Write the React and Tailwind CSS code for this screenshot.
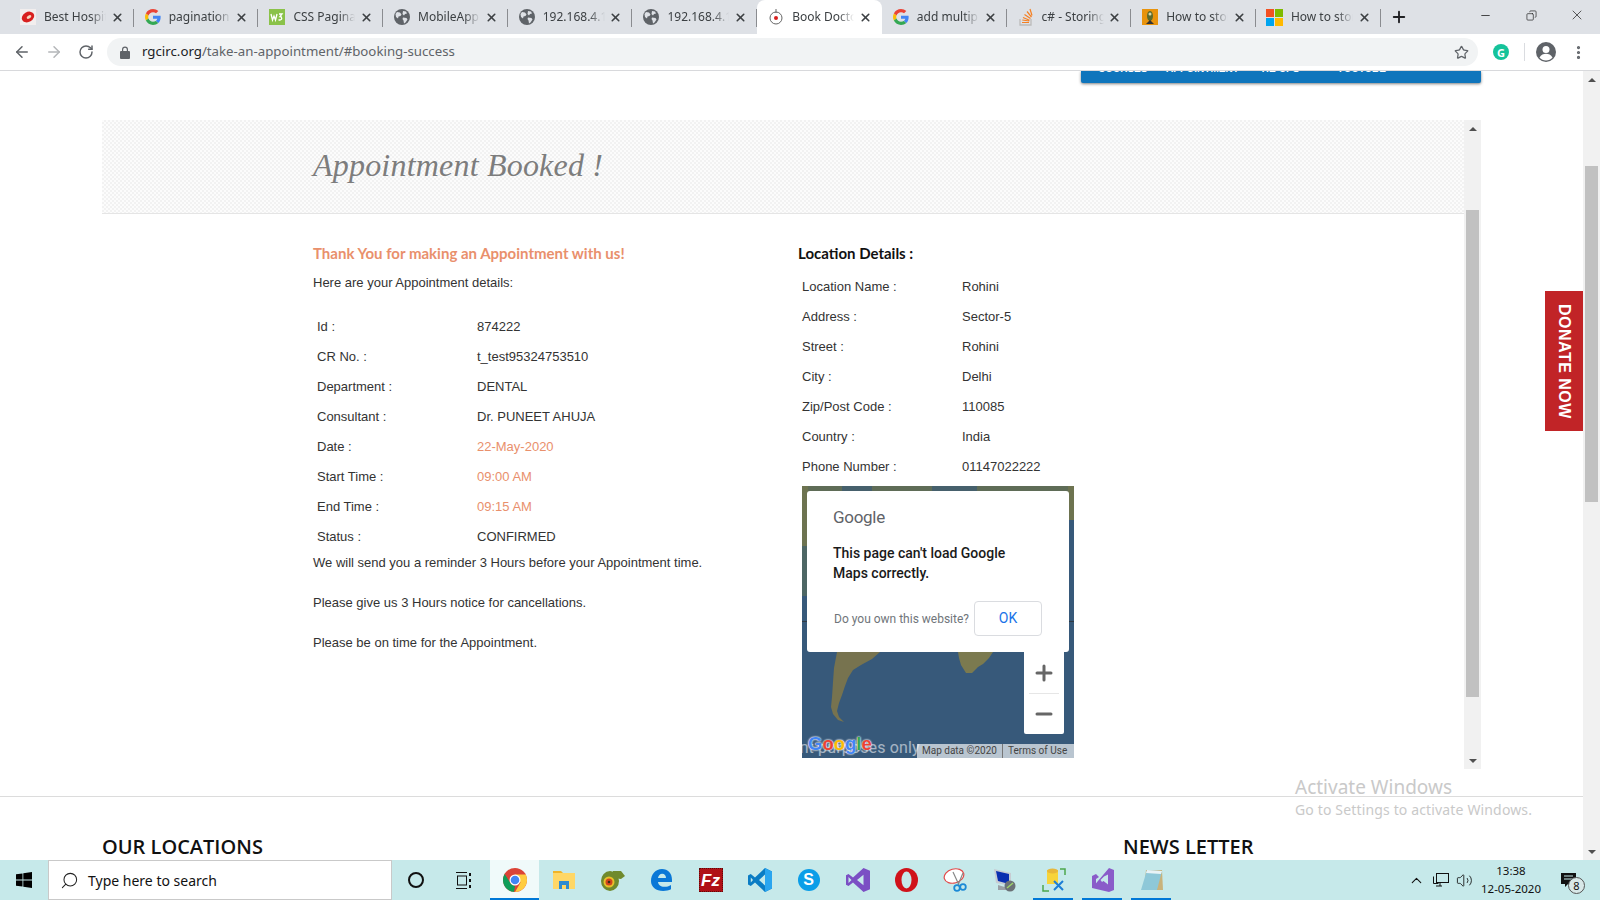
import { ArrowLeft, ArrowRight, RotateCw, Star, MoreVertical, X, Plus, Minus, ChevronUp, Volume2, Search, Copy } from "lucide-react";

const sans = "font-['Liberation_Sans',Arial,sans-serif]";
const lato = "font-['Lato',sans-serif]";
const segoe = "font-['Noto_Sans',sans-serif]";
const roboto = "font-['Roboto',sans-serif]";

// favicons
function GoogleG({ size = 16 }) {
  return (
    <svg width={size} height={size} viewBox="0 0 48 48" className="shrink-0">
      <path fill="#EA4335" d="M24 9.500c3.500 0 6.700 1.300 9.100 3.500l6.800-6.800C35.800 2.400 30.300 0 24 0 14.600 0 6.500 5.400 2.600 13.200l7.900 6.100C12.400 13.600 17.700 9.500 24 9.500z" />
      <path fill="#4285F4" d="M46.900 24.500c0-1.600-.1-3.100-.4-4.500H24v9h12.900c-.6 3-2.200 5.500-4.700 7.200l7.700 6c4.500-4.200 7-10.300 7-17.700z" />
      <path fill="#FBBC05" d="M10.500 28.700c-.5-1.400-.8-3-.8-4.700s.3-3.300.8-4.700l-7.900-6.100C.9 16.500 0 20.100 0 24s.9 7.500 2.600 10.800l7.900-6.100z" />
      <path fill="#34A853" d="M24 48c6.500 0 11.900-2.100 15.900-5.800l-7.700-6c-2.200 1.500-4.900 2.300-8.200 2.300-6.300 0-11.600-4.200-13.500-9.800l-7.900 6.100C6.500 42.600 14.600 48 24 48z" />
    </svg>
  );
}
function Globe() {
  return (
    <svg width="16" height="16" viewBox="0 0 16 16" className="shrink-0">
      <circle cx="8" cy="8" r="8" fill="#5f6368" />
      <path fill="#dee1e6" d="M3 3l3 .5 1.500 2-1 1.500-2 .5-.5 2L2 8 1.500 5zM9 2l3 .5 1 2-2 .5-1 1.500-1.500-1.500zM9 8.500l3.500.5 1 1.500-2 3-1.500 1-.5-3-1-1.500z" />
    </svg>
  );
}
function BestHospital() {
  return (
    <svg width="16" height="16" viewBox="0 0 16 16" className="shrink-0">
      <rect width="16" height="16" fill="#f2eeee" />
      <ellipse cx="8" cy="8" rx="6.500" ry="5" fill="#d8201f" transform="rotate(-30 8 8)" />
      <ellipse cx="9" cy="8" rx="2.500" ry="1.500" fill="#f4d9c0" transform="rotate(-30 9 8)" />
    </svg>
  );
}
function W3() {
  return (
    <svg width="16" height="16" viewBox="0 0 16 16" className="shrink-0">
      <rect width="16" height="16" fill="#8ac249" />
      <path d="M2 5l1.500 6L5 7l1.500 4L8 5M10 5h3l-2 2.500c2 0 2.500 3.500 0 3.500h-1.500" fill="none" stroke="#fff" strokeWidth="1.300" />
    </svg>
  );
}
function RgcIcon() {
  return (
    <svg width="16" height="18" viewBox="0 0 16 18" className="shrink-0">
      <circle cx="8" cy="10" r="6" fill="#fff" stroke="#666" strokeWidth="1" />
      <path d="M8 1v4" stroke="#666" strokeWidth="1" />
      <circle cx="8" cy="10" r="2" fill="#d8201f" />
    </svg>
  );
}
function StackOverflow() {
  return (
    <svg width="16" height="18" viewBox="0 0 16 18" className="shrink-0">
      <path d="M2 11v6h11v-6" fill="none" stroke="#bcbbbb" strokeWidth="1.300" />
      <path d="M4 14.500h7M4.300 12l7 1M5 9.500l6.500 2.700M6.500 6.500l6 4M9 3.500l4.500 5.500M12 1l2 6.500" fill="none" stroke="#f48024" strokeWidth="1.200" />
    </svg>
  );
}
function Robot() {
  return (
    <svg width="16" height="16" viewBox="0 0 16 16" className="shrink-0">
      <rect width="16" height="16" fill="#e8930c" />
      <ellipse cx="8" cy="7" rx="3" ry="5" fill="#5b6b2d" />
      <circle cx="8" cy="5" r="1.500" fill="#d8d8b0" />
      <path d="M4 15l4-4 4 4z" fill="#333" />
    </svg>
  );
}
function MsLogo({ size = 17 }) {
  return (
    <svg width={size} height={size} viewBox="0 0 17 17" className="shrink-0">
      <rect width="8" height="8" fill="#f25022" />
      <rect x="9" width="8" height="8" fill="#7fba00" />
      <rect y="9" width="8" height="8" fill="#00a4ef" />
      <rect x="9" y="9" width="8" height="8" fill="#ffb900" />
    </svg>
  );
}

const tabs = [
  { title: "Best Hospital", icon: <BestHospital /> },
  { title: "pagination css", icon: <GoogleG /> },
  { title: "CSS Pagination", icon: <W3 /> },
  { title: "MobileApp Demo", icon: <Globe /> },
  { title: "192.168.4.118", icon: <Globe /> },
  { title: "192.168.4.118", icon: <Globe /> },
  { title: "Book Doctor", icon: <RgcIcon />, active: true },
  { title: "add multiple", icon: <GoogleG /> },
  { title: "c# - Storing", icon: <StackOverflow /> },
  { title: "How to store", icon: <Robot /> },
  { title: "How to store", icon: <MsLogo /> },
];

function Tab({ title, icon, active }) {
  return (
    <div className={`relative flex h-[34px] w-[124.7px] shrink-0 items-center pl-[11px] pr-[10px] ${active ? "rounded-t-lg bg-white" : ""}`}>
      <div className="flex w-[16px] justify-center">{icon}</div>
      <div className={`ml-[8px] w-[62px] overflow-hidden whitespace-nowrap text-[12px] text-[#3c4043] ${segoe} [mask-image:linear-gradient(90deg,#000_75%,transparent)]`}>{title}</div>
      <X size={13} strokeWidth={3} className="ml-auto text-[#3c4043]" />
      {!active && <span className="absolute right-0 top-[9px] h-[18px] w-px bg-[#8a8c90]" />}
    </div>
  );
}

function TabBar() {
  return (
    <div className="flex h-[34px] shrink-0 bg-[#dee1e6] pl-[9px]">
      {tabs.map((t, i) => (
        <Tab key={i} {...t} />
      ))}
      <div className="ml-[9px] flex h-[34px] w-[18px] items-center justify-center">
        <Plus size={18} strokeWidth={2.500} className="text-[#202124]" />
      </div>
      <div className="ml-auto flex">
        <div className="flex h-[30px] w-[46px] items-center justify-center"><Minus size={13} strokeWidth={1.500} className="text-[#222]" /></div>
        <div className="flex h-[30px] w-[46px] items-center justify-center"><Copy size={11} strokeWidth={1.500} className="-scale-x-100 text-[#222]" /></div>
        <div className="flex h-[30px] w-[46px] items-center justify-center"><X size={16} strokeWidth={1.100} className="text-[#222]" /></div>
      </div>
    </div>
  );
}

function Toolbar() {
  return (
    <div className="flex h-[37px] shrink-0 items-center border-b border-[#d8d9dc] bg-white">
      <ArrowLeft size={18} strokeWidth={2} className="ml-[13px] text-[#5f6368]" />
      <ArrowRight size={18} strokeWidth={2} className="ml-[14px] text-[#b4b6b9]" />
      <RotateCw size={16} strokeWidth={2.200} className="ml-[15px] text-[#5f6368]" />
      <div className="ml-[13px] flex h-[28px] w-[1371px] items-center rounded-full bg-[#f1f3f4] pl-[13px] pr-[9px]">
        <svg width="10" height="13" viewBox="0 0 10 13" className="shrink-0">
          <path fill="#5f6368" d="M1 5h1V3.500a3 3 0 0 1 6 0V5h1a1 1 0 0 1 1 1v6a1 1 0 0 1-1 1H1a1 1 0 0 1-1-1V6a1 1 0 0 1 1-1zm2.200 0h3.600V3.500a1.800 1.800 0 0 0-3.600 0z" />
        </svg>
        <span className={`ml-[12px] text-[13.25px] leading-none ${segoe}`}>
          <span className="text-[#202124]">rgcirc.org</span>
          <span className="text-[#5f6368]">/take-an-appointment/#booking-success</span>
        </span>
        <Star size={15} strokeWidth={2} className="ml-auto text-[#5f6368]" />
      </div>
      <div className="ml-[15px] flex h-[16px] w-[16px] items-center justify-center rounded-full bg-[#15c39a] text-[11px] font-bold leading-none text-white">G</div>
      <span className="ml-[15px] h-[18px] w-px bg-[#dadce0]" />
      <svg width="20" height="20" viewBox="0 0 20 20" className="ml-[11px]">
        <circle cx="10" cy="10" r="10" fill="#5f6368" />
        <circle cx="10" cy="7.500" r="3.500" fill="#fff" />
        <path d="M3.500 15.500c1.500-3 4-3.800 6.500-3.800s5 .8 6.500 3.800c-1.500 1.800-4 3-6.500 3s-5-1.200-6.500-3z" fill="#fff" />
      </svg>
      <MoreVertical size={17} strokeWidth={2.500} className="ml-[14px] text-[#5f6368]" />
    </div>
  );
}

function ScrollBar({ top, height }) {
  return (
    <div className="flex w-[17px] shrink-0 flex-col bg-[#f1f1f1]">
      <div className="flex h-[17px] items-center justify-center">
        <span className="h-0 w-0 border-x-[4px] border-b-[4px] border-x-transparent border-b-[#505050]" />
      </div>
      <div className={`mx-[2px] ${top} ${height} bg-[#c1c1c1]`} />
      <div className="flex-1" />
      <div className="flex h-[17px] items-center justify-center">
        <span className="h-0 w-0 border-x-[4px] border-t-[4px] border-x-transparent border-t-[#505050]" />
      </div>
    </div>
  );
}

function DetailRow({ label, value, orange }) {
  return (
    <div className="flex h-[30px] items-center pl-[4px]">
      <span className="w-[160px]">{label}</span>
      <span className={orange ? "text-[#e9906c]" : ""}>{value}</span>
    </div>
  );
}

const appointment = [
  ["Id :", "874222"],
  ["CR No. :", "t_test95324753510"],
  ["Department :", "DENTAL"],
  ["Consultant :", "Dr. PUNEET AHUJA"],
  ["Date :", "22-May-2020", true],
  ["Start Time :", "09:00 AM", true],
  ["End Time :", "09:15 AM", true],
  ["Status :", "CONFIRMED"],
];

const location = [
  ["Location Name :", "Rohini"],
  ["Address :", "Sector-5"],
  ["Street :", "Rohini"],
  ["City :", "Delhi"],
  ["Zip/Post Code :", "110085"],
  ["Country :", "India"],
  ["Phone Number :", "01147022222"],
];

function MapBox() {
  return (
    <div className={`relative h-[272px] w-[272px] overflow-hidden bg-[#37597a] ${roboto}`}>
      <svg width="272" height="272" viewBox="0 0 272 272" className="block">
        <path fill="#5f6c57" d="M0 0h272v6H0z" />
        <path fill="#46606c" d="M40 0h30v6H40zM130 0h45v6h-45z" />
        <path fill="#6d7350" d="M0 0h6v60H0z" />
        <path fill="#4d6664" d="M0 60h6v50H0z" />
        <path fill="#6d7350" d="M266 0h6v34h-6z" />
        <path fill="#2f3a44" d="M0 135h272v1H0z" />
        <path fill="#77734f" d="M35 166h43l-8 7-11 6-8 5-5 8-3 8-3 9-3 8-2 8 2 6 5 5-6-2-5-6-2-7 1-10 1-15 1-14z" />
        <path fill="#7b7a4f" d="M156 166h35l-4 6-6 6-5 3-6 6-6 0-5-8-2-7z" />
      </svg>

      <div className="absolute left-[5px] top-[5px] h-[161px] w-[262px] rounded-[3px] bg-white">
        <div className="pl-[26px] pt-[14px] text-[17px] leading-[24px] tracking-[-0.3px] text-[#5f6368]">Google</div>
        <div className="mt-[14px] pl-[26px] text-[14px] font-medium leading-[20px] text-[#1a1a1a]">
          This page can't load Google
          <br />
          Maps correctly.
        </div>
        <div className="mt-[18px] flex items-center pl-[27px]">
          <span className="w-[140px] shrink-0 whitespace-nowrap text-[12px] text-[#70757a]">Do you own this website?</span>
          <span className="flex h-[35px] w-[68px] items-center justify-center rounded-[4px] border border-[#dadce0] text-[14px] text-[#1a73e8]">OK</span>
        </div>
      </div>

      <div className="absolute left-[222px] top-[166px] flex h-[82px] w-[40px] flex-col items-center rounded-b-[2px] bg-white">
        <div className="flex h-[41px] items-center justify-center"><Plus size={24} strokeWidth={3} className="text-[#666]" /></div>
        <span className="h-px w-[30px] bg-[#e6e6e6]" />
        <div className="flex h-[40px] items-center justify-center"><Minus size={24} strokeWidth={3} className="text-[#666]" /></div>
      </div>

      <div className="absolute bottom-[1px] left-[-11px] whitespace-nowrap text-[16px] leading-[18px] tracking-[0.15px] text-white/55">ent purposes only</div>
      <div className={`absolute bottom-[4px] left-[6px] text-[18.5px] font-bold leading-[20px] ${sans} [text-shadow:0_0_2px_#fff,0_0_2px_#fff]`}>
        <span className="text-[#4285f4]">G</span>
        <span className="text-[#ea4335]">o</span>
        <span className="text-[#fbbc05]">o</span>
        <span className="text-[#4285f4]">g</span>
        <span className="text-[#34a853]">l</span>
        <span className="text-[#ea4335]">e</span>
      </div>
      <div className="absolute bottom-0 right-0 flex h-[14px] w-[157px] items-center bg-white/65 text-[10px] leading-none text-[#444]">
        <span className="w-[85px] pl-[5px]">Map data ©2020</span>
        <span className="h-[14px] w-px bg-[#777]" />
        <span className="pl-[5px]">Terms of Use</span>
      </div>
    </div>
  );
}

function Content() {
  return (
    <div className="flex min-w-0 flex-1 flex-col">
      <div className="flex h-[94px] shrink-0 items-center border-b border-[#e5e5e5] pb-[4px] pl-[211px] [background:repeating-conic-gradient(#f2f2f2_0_25%,#fcfcfc_0_50%)_0_0/4px_4px]">
        <h1 className="font-['Liberation_Serif',serif] text-[32px] italic leading-none tracking-[0.2px] text-[#7d7d7d]">Appointment Booked !</h1>
      </div>
      <div className={`flex pl-[211px] pt-[29px] text-[13px] text-[#333] ${sans}`}>
        <div className="w-[485px]">
          <h3 className={`text-[15px] font-bold leading-[20px] text-[#e9906c] ${lato}`}>Thank You for making an Appointment with us!</h3>
          <p className="mt-[10px] leading-[20px]">Here are your Appointment details:</p>
          <div className="mt-[19px]">
            {appointment.map(([l, v, o]) => (
              <DetailRow key={l} label={l} value={v} orange={o} />
            ))}
          </div>
          <p className="mt-[1px] leading-[20px]">We will send you a reminder 3 Hours before your Appointment time.</p>
          <p className="mt-[20px] leading-[20px]">Please give us 3 Hours notice for cancellations.</p>
          <p className="mt-[20px] leading-[20px]">Please be on time for the Appointment.</p>
        </div>
        <div>
          <h3 className={`text-[15px] font-bold leading-[20px] text-[#111] ${lato}`}>Location Details :</h3>
          <div className="mt-[9px]">
            {location.map(([l, v]) => (
              <DetailRow key={l} label={l} value={v} />
            ))}
          </div>
          <div className="ml-[4px] mt-[4px]"><MapBox /></div>
        </div>
      </div>
    </div>
  );
}

function Page() {
  return (
    <div className="relative flex min-h-0 flex-1 bg-white">
      <div className="flex w-[1583px] shrink-0 flex-col overflow-hidden">
        <div className="ml-[1081px] flex h-[12px] w-[400px] shrink-0 rounded-b-[2px] bg-[#0f75bc] shadow-[0_1px_3px_rgba(0,0,0,0.5)]">
          <div className={`flex h-[3px] w-full overflow-hidden pl-[17px] text-[10px] font-bold leading-[10px] text-white ${sans}`}>
            <span className="-mt-[7px] w-[68px] shrink-0">COURSES</span>
            <span className="-mt-[7px] w-[94px] shrink-0">APPOINTMENT</span>
            <span className="-mt-[7px] w-[77px] shrink-0">TIE-UPS</span>
            <span className="-mt-[7px] shrink-0">YOUTUBE</span>
          </div>
        </div>
        <div className="ml-[102px] mt-[37px] flex h-[649px] w-[1379px] shrink-0">
          <Content />
          <ScrollBar top="mt-[73px]" height="h-[487px]" />
        </div>
        <div className="mt-[27px] h-px shrink-0 bg-[#dcdcdc]" />
        <div className="flex pl-[102px] pt-[36px] font-['Open_Sans',sans-serif] text-[20px] font-semibold leading-[28px] text-[#111]">
          <span className="w-[1021px]">OUR LOCATIONS</span>
          <span>NEWS LETTER</span>
        </div>
      </div>
      <ScrollBar top="mt-[78px]" height="h-[336px]" />

      <div className={`absolute left-[1545px] top-[220px] flex h-[140px] w-[38px] items-center justify-center bg-[#c12427] text-[16px] font-bold tracking-[0.5px] text-white ${sans} [writing-mode:vertical-rl]`}>DONATE NOW</div>

      <div className={`pointer-events-none absolute left-[1295px] top-[703px] text-[#c9c9c9] ${segoe}`}>
        <div className="text-[19px] leading-[26px]">Activate Windows</div>
        <div className="text-[14px] leading-[20px] tracking-[0.15px]">Go to Settings to activate Windows.</div>
      </div>
    </div>
  );
}

// taskbar icons
const taskIcons = {
  chrome: (
    <svg width="24" height="24" viewBox="0 0 24 24">
      <circle cx="12" cy="12" r="12" fill="#db4437" />
      <path fill="#0f9d58" d="M12 24C5.400 24 0 18.600 0 12c0-2.300.6-4.300 1.700-6.100L8 16l4 2.200-1 5.700z" />
      <path fill="#ffcd40" d="M12 24l5.500-9.500L12 6.500h10.800c.8 1.600 1.200 3.500 1.200 5.500 0 6.600-5.400 12-12 12z" />
      <circle cx="12" cy="12" r="5.500" fill="#fff" />
      <circle cx="12" cy="12" r="4.300" fill="#4285f4" />
    </svg>
  ),
  folder: (
    <svg width="22" height="20" viewBox="0 0 22 20">
      <path fill="#f0b429" d="M0 1h8l2 2h-10z" />
      <path fill="#ffd766" d="M0 3h22v16H0z" />
      <path fill="#2d8bd0" d="M6 11h10v8h-3v-4H9v4H6z" />
    </svg>
  ),
  chameleon: (
    <svg width="24" height="22" viewBox="0 0 24 22">
      <ellipse cx="9" cy="12" rx="9" ry="10" fill="#6f8a2d" />
      <path d="M12 2h8l4 5-4 3-8-1z" fill="#6f8a2d" />
      <circle cx="8" cy="13" r="5.500" fill="#e8c02a" />
      <circle cx="8" cy="13" r="3.500" fill="#d2451e" />
      <circle cx="8" cy="13" r="1.300" fill="#3b2a12" />
    </svg>
  ),
  edge: (
    <svg width="21" height="22" viewBox="0 0 21 22">
      <path fill="#0a78d7" d="M0 12C0 5 4.500 0 11 0c6 0 10 4 10 11v2H7c.3 3 2.700 4.800 6.300 4.800 2.500 0 4.800-.7 6.700-1.900v4.400c-2.200 1.200-4.800 1.700-7.800 1.700C5 22 0 18 0 12zm7-3h8c0-2.700-1.500-4.300-3.800-4.300S7.500 6.300 7 9z" />
    </svg>
  ),
  filezilla: (
    <div className={`flex h-[24px] w-[24px] items-center justify-center border border-dotted border-[#5e0a0a] bg-[#b01116] text-[17px] font-bold italic leading-none text-white ${sans}`}>Fz</div>
  ),
  vscode: (
    <svg width="24" height="24" viewBox="0 0 24 24">
      <path fill="#0a7cc4" d="M17 0l7 3.500v17L17 24 7 14.500 2.800 18 0 16.500v-9L2.800 6 7 9.500zM17 6.500L11 12l6 5.500zM2.800 9.500v5L5 12z" />
      <path fill="#2aa5ef" d="M17 0l7 3.500v17L17 24z" />
    </svg>
  ),
  skype: (
    <div className={`flex h-[22px] w-[22px] items-center justify-center rounded-full bg-[#0b9ee8] text-[16px] font-bold leading-none text-white ${sans}`}>S</div>
  ),
  vs: (
    <svg width="24" height="24" viewBox="0 0 24 24">
      <path fill="#7b4fc4" d="M17.500 0L24 2.800v18.400L17.500 24 7 14.500 2.500 18 0 16.700V7.300L2.500 6 7 9.500zM17.500 6.800L11 12l6.500 5.200zM2.500 9v6L5.500 12z" />
    </svg>
  ),
  opera: (
    <svg width="23" height="24" viewBox="0 0 23 24">
      <ellipse cx="11.500" cy="12" rx="11.500" ry="12" fill="#d0121a" />
      <ellipse cx="11.500" cy="12" rx="5" ry="8.500" fill="#c6e9ea" />
    </svg>
  ),
  snip: (
    <svg width="26" height="24" viewBox="0 0 26 24">
      <ellipse cx="11" cy="8" rx="10" ry="7" fill="#fff" stroke="#e24a4a" strokeWidth="1.200" transform="rotate(-15 11 8)" />
      <path d="M10 4l6 13M20 5l-5 12" stroke="#888" strokeWidth="1.200" />
      <circle cx="14" cy="20" r="2.800" fill="none" stroke="#1c8ad6" strokeWidth="1.800" />
      <circle cx="20" cy="19" r="2.800" fill="none" stroke="#1c8ad6" strokeWidth="1.800" />
    </svg>
  ),
  rdp: (
    <svg width="24" height="24" viewBox="0 0 24 24">
      <path fill="#c7ccd2" d="M1 1l17 4v13L3 15z" />
      <path fill="#0a2fb0" d="M3 3l13 3v10L5 13z" />
      <path fill="#9aa0a6" d="M5 17l10 3v2H5z" />
      <circle cx="17" cy="18" r="5.500" fill="#6b7176" />
      <path d="M14 20l6-5" stroke="#9ed36a" strokeWidth="1.500" />
    </svg>
  ),
  sqltool: (
    <svg width="24" height="24" viewBox="0 0 24 24">
      <path fill="#f7d43a" d="M5 2h11v14H5z" />
      <ellipse cx="10.500" cy="3" rx="5.500" ry="2.500" fill="#e8b83a" />
      <path d="M1 17v6h6M18 1h5v6" fill="none" stroke="#4ca64c" strokeWidth="1.500" />
      <path d="M12 13l9 9M21 13l-9 9" stroke="#1c7ed6" strokeWidth="2" />
    </svg>
  ),
  vs2: (
    <svg width="24" height="24" viewBox="0 0 24 24">
      <path fill="#8a5cc9" d="M18 0l5 2v20l-5 2-17-4zM1 20V8l4-2 3 3-3 2v6z" />
      <path fill="#c6e9ea" d="M17 6.500v10l-4.500-3.500L11 14l-1.500-2L13 8.500z" />
    </svg>
  ),
  notepad: (
    <svg width="24" height="24" viewBox="0 0 24 24">
      <path fill="#c9b27a" d="M6 2l16 0 1 20H4z" />
      <path fill="#8ec8d8" d="M7 2l15 1-5 19H1z" />
      <path fill="#e8f3f6" d="M7 2l15 1-1 3-15-1z" />
    </svg>
  ),
};

const taskbarApps = [
  { key: "chrome", active: true },
  { key: "folder" },
  { key: "chameleon" },
  { key: "edge" },
  { key: "filezilla" },
  { key: "vscode" },
  { key: "skype" },
  { key: "vs" },
  { key: "opera" },
  { key: "snip" },
  { key: "rdp" },
  { key: "sqltool", open: true },
  { key: "vs2", open: true },
  { key: "notepad", open: true },
];

function TaskButton({ app }) {
  return (
    <div className={`relative flex h-[40px] w-[49px] shrink-0 items-center justify-center ${app.active ? "bg-[#f0fafa]" : ""}`}>
      {taskIcons[app.key]}
      {app.active && <span className="absolute bottom-0 left-0 h-[2px] w-full bg-[#0078d7]" />}
      {app.open && <span className="absolute bottom-0 left-[4px] h-[2px] w-[40px] bg-[#0078d7]" />}
    </div>
  );
}

function Taskbar() {
  return (
    <div className={`flex h-[40px] shrink-0 bg-[#c6e9ea] text-[#111] ${segoe}`}>
      <div className="flex w-[48px] items-center justify-center">
        <svg width="16" height="16" viewBox="0 0 16 16"><path fill="#000" d="M0 2.300l6.500-.9v6.200H0zM7.300 1.300L16 0v7.600H7.300zM0 8.400h6.500v6.200L0 13.700zM7.300 8.400H16V16l-8.700-1.200z" /></svg>
      </div>
      <div className="flex w-[344px] items-center border border-[#c9c9c9] bg-white pl-[11px]">
        <Search size={19} strokeWidth={1.300} className="-scale-x-100 text-[#222]" />
        <span className="ml-[9px] text-[14px]">Type here to search</span>
      </div>
      <div className="flex w-[47px] items-center justify-center">
        <span className="h-[16px] w-[16px] rounded-full border-2 border-[#111]" />
      </div>
      <div className="flex w-[48px] items-center justify-center">
        <svg width="17" height="17" viewBox="0 0 17 17" fill="none" stroke="#111" strokeWidth="1"><path d="M1 .5h11M1 16.500h11" /><rect x="2.500" y="4" width="9" height="9" /><path d="M15 1v3M15 7v3M15 13v3" strokeWidth="2" /></svg>
      </div>
      <div className="w-[3px]" />
      {taskbarApps.map((a) => (
        <TaskButton key={a.key} app={a} />
      ))}
      <div className="ml-auto flex items-center pr-[10px]">
        <div className="flex w-[24px] justify-center"><ChevronUp size={17} strokeWidth={1.500} /></div>
        <div className="flex w-[24px] justify-center">
          <svg width="17" height="17" viewBox="0 0 17 17" fill="none" stroke="#111"><rect x="4.500" y="1.500" width="12" height="9" /><path d="M1.500 4.500v7h5M4 14h6M8 11v3" /></svg>
        </div>
        <div className="flex w-[24px] justify-center"><Volume2 size={17} strokeWidth={1.200} /></div>
        <div className="flex w-[70px] flex-col items-center text-[11.5px] leading-[18px]">
          <span>13:38</span>
          <span>12-05-2020</span>
        </div>
        <div className="relative flex w-[44px] justify-center">
          <svg width="17" height="17" viewBox="0 0 17 17"><path fill="#111" d="M1 1h15v11H8l-3 3v-3H1z" /><path stroke="#c6e9ea" d="M4 4h9M4 7h9" /></svg>
          <span className="absolute left-[22px] top-[5px] flex h-[17px] w-[17px] items-center justify-center rounded-full border border-[#555] bg-[#d8e8e8] text-[11px] leading-none">8</span>
        </div>
      </div>
    </div>
  );
}

export default function App() {
  return (
    <div className="flex h-[900px] w-[1600px] flex-col overflow-hidden bg-white">
      <TabBar />
      <Toolbar />
      <Page />
      <Taskbar />
    </div>
  );
}
